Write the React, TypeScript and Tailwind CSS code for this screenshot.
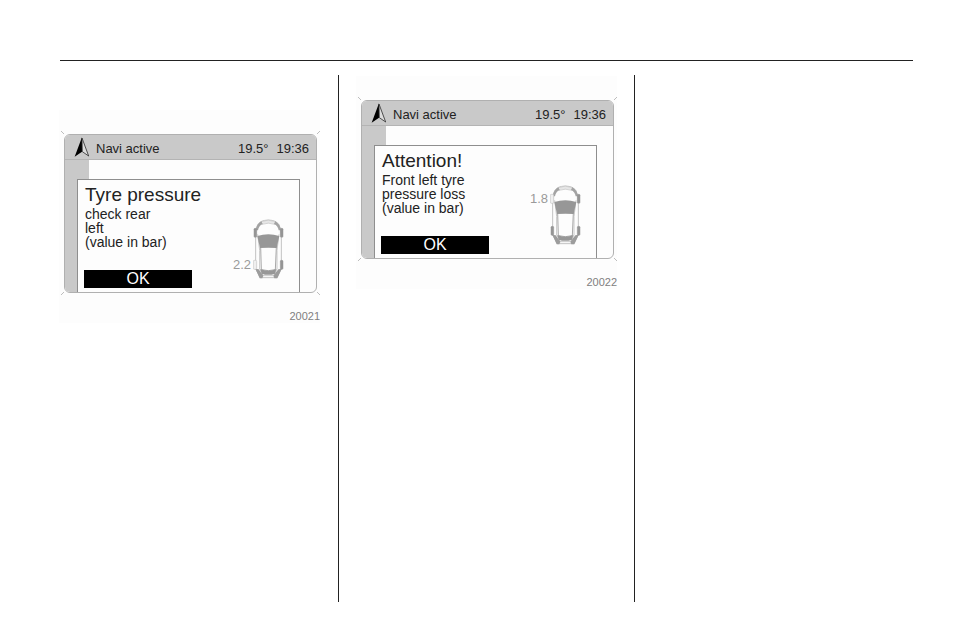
interface TyreWarning {
  code: string;
  title: string;
  lines: string[];
  pressure: string;
  tyre: "frontLeft" | "rearLeft";
}

const tyrePressure: TyreWarning = {
  code: "20021",
  title: "Tyre pressure",
  lines: ["check rear", "left", "(value in bar)"],
  pressure: "2.2",
  tyre: "rearLeft",
};

const attention: TyreWarning = {
  code: "20022",
  title: "Attention!",
  lines: ["Front left tyre", "pressure loss", "(value in bar)"],
  pressure: "1.8",
  tyre: "frontLeft",
};

function NaviArrow() {
  return (
    <svg className="w-4 h-5 shrink-0" viewBox="0 0 48 60" aria-hidden="true">
      <path d="M24 1 L2 59 L24 44 Z" fill="#000" />
      <path
        d="M24 3 L44 57 L25 44 Z"
        fill="#dcdcdc"
        stroke="#333"
        strokeWidth="2.5"
        strokeLinejoin="round"
      />
    </svg>
  );
}

function Wheel({ x, y, low }: { x: number; y: number; low?: boolean }) {
  return (
    <rect
      x={low ? x - 2 : x}
      y={y}
      width={low ? 10 : 8}
      height="27"
      rx="3"
      fill={low ? "#efefef" : "#959595"}
      stroke={low ? "#b8b8b8" : "#959595"}
      strokeWidth="1.5"
    />
  );
}

function Car({ tyre }: { tyre: TyreWarning["tyre"] }) {
  return (
    <svg className="w-8 h-[60px]" viewBox="0 0 96 180" fill="none" aria-hidden="true">
      {/* Body */}
      <path
        d="M9 32 Q12 14 23 8 Q46 -2 69 8 Q80 14 83 32 L85 60 V150 L72 176 H22 L8 150 V60 Z"
        fill="#fdfdfd"
        stroke="#c2c2c2"
        strokeWidth="3"
      />
      <path
        d="M24 8 Q46 -1 68 8 L65 16 Q46 9 27 16 Z"
        fill="#e6e6e6"
        stroke="#c2c2c2"
        strokeWidth="2"
      />
      <path d="M14 46 L20 94 V150 L30 170 H62 L72 150 V94 L78 46" stroke="#c8c8c8" strokeWidth="3" />

      {/* Head lights and rear corners */}
      <path d="M8 34 Q11 14 25 7 L29 15 Q17 20 15 34 Z" fill="#a3a3a3" />
      <path d="M84 34 Q81 14 67 7 L63 15 Q75 20 77 34 Z" fill="#a3a3a3" />
      <path d="M7 149 L17 151 L31 170 L28 178 H20 Z" fill="#9c9c9c" />
      <path d="M86 149 L76 151 L61 170 L64 178 H73 Z" fill="#9c9c9c" />

      {/* Windows */}
      <path d="M23 84 L25 152 Q46 158 67 152 L70 84" fill="#fdfdfd" stroke="#a8a8a8" strokeWidth="3" />
      <path d="M13 51 Q46 41 79 51 L71 87 Q46 85 21 87 Z" fill="#979797" />
      <path d="M22 150 Q46 160 70 150 L66 164 Q46 171 26 164 Z" fill="#979797" />

      <Wheel x={3} y={28} low={tyre === "frontLeft"} />
      <Wheel x={82} y={28} />
      <Wheel x={3} y={124} low={tyre === "rearLeft"} />
      <Wheel x={82} y={124} />
    </svg>
  );
}

function CropMarks() {
  return (
    <svg
      className="absolute -left-[3px] -top-[3px] w-[259px] h-[164px] pointer-events-none"
      viewBox="0 0 259 164"
      stroke="#bdbdbd"
      aria-hidden="true"
    >
      <path d="M0 0 L3 3 M259 0 L256 3 M0 164 L3 161 M259 164 L256 161" />
    </svg>
  );
}

function Display({ warning }: { warning: TyreWarning }) {
  return (
    <figure className="w-[261px] bg-[#fdfdfd] pt-6 pl-[5px] pr-[3px]">
      <div className="relative">
        <CropMarks />
        <div className="rounded-md border border-[#b0b0b0] overflow-hidden">
          {/* Status bar */}
          <div className="h-[25px] flex items-start bg-[#c9c9c9] border-b border-[#b4b4b4] pl-[9px] pr-[7px] pt-[2px] text-[13px] leading-6 text-[#222]">
            <NaviArrow />
            <span className="ml-[6px]">Navi active</span>
            <span className="ml-auto">19.5°</span>
            <span className="ml-2">19:36</span>
          </div>

          <div className="grid">
            <div className="col-start-1 row-start-1 w-6 bg-[#c9c9c9]" />
            <section className="col-start-1 row-start-1 mt-[19px] ml-3 mr-4 border border-b-0 border-[#8e8e8e] bg-[#fdfdfd] pt-1 pb-1 pl-[6px] pr-[14px] flex justify-between">
              <div>
                <h2 className="pl-px text-[19px] leading-[22px] text-[#222] whitespace-nowrap">
                  {warning.title}
                </h2>
                <p className="mt-px pl-px text-[14px] leading-[14px] text-[#222] whitespace-nowrap">
                  {warning.lines.map((line) => (
                    <span key={line} className="block">
                      {line}
                    </span>
                  ))}
                </p>
                <button
                  type="button"
                  className="mt-[21px] block w-[108px] h-[18px] bg-black text-white text-[16px] leading-[18px] text-center"
                >
                  OK
                </button>
              </div>

              <div className="flex self-end pb-[9px]">
                <span
                  className={`mr-[2px] text-[13px] leading-4 text-[#9a9a9a] ${
                    warning.tyre === "rearLeft" ? "self-end mb-[6px]" : "self-start mt-[6px]"
                  }`}
                >
                  {warning.pressure}
                </span>
                <Car tyre={warning.tyre} />
              </div>
            </section>
          </div>
        </div>
      </div>
      <figcaption className="mt-[18px] -mr-[3px] pb-px text-right text-[11px] leading-[11px] text-[#808080]">
        {warning.code}
      </figcaption>
    </figure>
  );
}

export default function App() {
  return (
    <main className="min-h-screen flex flex-col bg-white pt-[60px] pb-[35px] pl-[59px] pr-10 font-['Liberation_Sans',Arial,sans-serif]">
      <hr className="ml-px border-t border-[#222]" />
      <div className="mt-[14px] flex-1 grid grid-cols-[280fr_296fr_278fr]">
        <div className="border-r border-[#222] pt-[35px]">
          <Display warning={tyrePressure} />
        </div>
        <div className="border-r border-[#222] pt-px pl-[17px]">
          <Display warning={attention} />
        </div>
        <div />
      </div>
    </main>
  );
}
